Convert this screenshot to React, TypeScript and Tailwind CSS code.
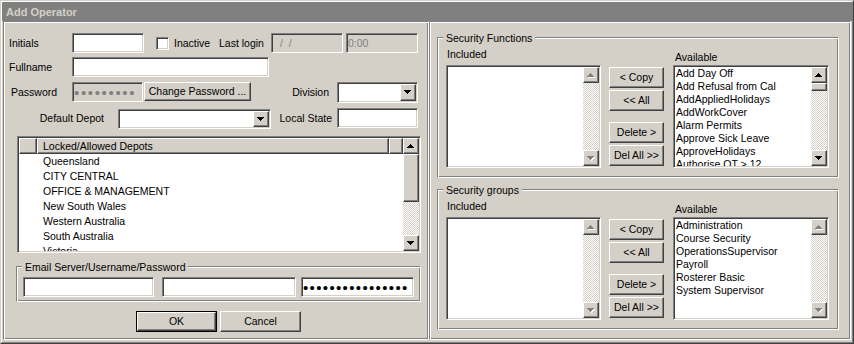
import React from "react";

const sunken =
  "border border-t-[#808080] border-l-[#808080] border-r-white border-b-white shadow-[inset_1px_1px_0_#404040,inset_-1px_-1px_0_#d4d0c8]";
const raised =
  "border border-t-white border-l-white border-r-[#404040] border-b-[#404040] shadow-[inset_-1px_-1px_0_#808080] bg-[#d4d0c8]";
const etched =
  "border border-t-[#808080] border-l-[#808080] border-r-white border-b-white shadow-[inset_1px_1px_0_#fff,inset_-1px_-1px_0_#808080]";
const dither = "bg-[repeating-conic-gradient(#fff_0_25%,#d4d0c8_0_50%)] bg-[length:2px_2px]";

const depots = [
  "Queensland",
  "CITY CENTRAL",
  "OFFICE & MANAGEMENT",
  "New South Wales",
  "Western Australia",
  "South Australia",
  "Victoria",
];

const functions = [
  "Add Day Off",
  "Add Refusal from Cal",
  "AddAppliedHolidays",
  "AddWorkCover",
  "Alarm Permits",
  "Approve Sick Leave",
  "ApproveHolidays",
  "Authorise OT > 12",
];

const groups = [
  "Administration",
  "Course Security",
  "OperationsSupervisor",
  "Payroll",
  "Rosterer Basic",
  "System Supervisor",
];

function Arrow({ dir, disabled }: { dir: "up" | "down"; disabled?: boolean }) {
  const d =
    dir === "up"
      ? "M3 0h1v1H3zM2 1h3v1H2zM1 2h5v1H1zM0 3h7v1H0z"
      : "M0 0h7v1H0zM1 1h5v1H1zM2 2h3v1H2zM3 3h1v1H3z";
  return (
    <svg width="8" height="5" viewBox="0 0 8 5" shapeRendering="crispEdges">
      {disabled && <path d={d} fill="#fff" transform="translate(1 1)" />}
      <path d={d} fill={disabled ? "#808080" : "#000"} />
    </svg>
  );
}

function Btn({
  children,
  className = "",
  def = false,
}: {
  children?: React.ReactNode;
  className?: string;
  def?: boolean;
}) {
  if (def) {
    return (
      <div className={`border border-black ${className}`}>
        <div className={`h-full ${raised} flex items-center justify-center`}>{children}</div>
      </div>
    );
  }
  return <div className={`${raised} flex items-center justify-center ${className}`}>{children}</div>;
}

function Edit({
  children,
  className = "",
  disabled = false,
}: {
  children?: React.ReactNode;
  className?: string;
  disabled?: boolean;
}) {
  return (
    <div
      className={`${sunken} ${
        disabled ? "bg-[#d4d0c8] text-[#808080]" : "bg-white"
      } flex items-center overflow-hidden whitespace-pre ${className}`}
    >
      {children}
    </div>
  );
}

function Combo({ className = "" }: { className?: string }) {
  return (
    <div className={`${sunken} bg-white p-[1px] flex justify-end ${className}`}>
      <div className={`${raised} w-[16px] h-full flex items-center justify-center`}>
        <Arrow dir="down" />
      </div>
    </div>
  );
}

function VScroll({ enabled, thumb }: { enabled: boolean; thumb?: string }) {
  return (
    <div className="w-[16px] h-full flex flex-col shrink-0">
      <div className={`${raised} h-[16px] shrink-0 flex items-center justify-center`}>
        <Arrow dir="up" disabled={!enabled} />
      </div>
      <div className={`flex-1 ${dither}`}>{thumb && <div className={`${raised} ${thumb}`} />}</div>
      <div className={`${raised} h-[16px] shrink-0 flex items-center justify-center`}>
        <Arrow dir="down" disabled={!enabled} />
      </div>
    </div>
  );
}

function ListBox({ items, enabled, thumb }: { items: string[]; enabled: boolean; thumb?: string }) {
  return (
    <div className={`${sunken} bg-white p-[1px] flex h-[103px]`}>
      <div className="flex-1 overflow-hidden pl-[1px]">
        {items.map((i) => (
          <div key={i} className="h-[13px] leading-[13px] whitespace-nowrap">
            {i}
          </div>
        ))}
      </div>
      <VScroll enabled={enabled} thumb={thumb} />
    </div>
  );
}

function Group({
  title,
  className = "",
  children,
}: {
  title: string;
  className?: string;
  children?: React.ReactNode;
}) {
  return (
    <div className={`relative ${etched} ${className}`}>
      <span className="absolute -top-[6px] left-[5px] px-[3px] bg-[#d4d0c8] leading-[13px]">{title}</span>
      {children}
    </div>
  );
}

function Transfer({ title, available, enabled, thumb }: { title: string; available: string[]; enabled: boolean; thumb?: string }) {
  return (
    <Group title={title} className="w-[402px] h-[141px] flex pl-[8px]">
      <div className="w-[155px]">
        <div className="mt-[10px] h-[13px] pl-[1px]">Included</div>
        <div className="mt-[4px]">
          <ListBox items={[]} enabled={false} />
        </div>
      </div>
      <div className="ml-[8px] w-[55px] flex flex-col">
        <Btn className="mt-[29px] h-[21px]">&lt; Copy</Btn>
        <Btn className="mt-[2px] h-[21px]">&lt;&lt; All</Btn>
        <Btn className="mt-[11px] h-[21px]">Delete &gt;</Btn>
        <Btn className="mt-[2px] h-[21px]">Del All &gt;&gt;</Btn>
      </div>
      <div className="ml-[9px] w-[156px]">
        <div className="mt-[13px] h-[13px] pl-[2px]">Available</div>
        <div className="mt-[1px]">
          <ListBox items={available} enabled={enabled} thumb={thumb} />
        </div>
      </div>
    </Group>
  );
}

function LeftPanel() {
  return (
    <div className={`${etched} w-[426px] h-[319px] flex flex-col shrink-0`}>
      <div className="mt-[11px] flex items-center h-[20px]">
        <span className="w-[68px] pl-[5px]">Initials</span>
        <Edit className="w-[72px] h-[20px]" />
        <div className={`${sunken} bg-white w-[13px] h-[13px] ml-[12px]`} />
        <span className="ml-[5px] w-[45px]">Inactive</span>
        <span className="w-[52px]">Last login</span>
        <Edit disabled className="w-[72px] h-[20px] pl-[8px]">
          {"/  /"}
        </Edit>
        <Edit disabled className="ml-[3px] w-[72px] h-[20px] pl-[1px]">
          0:00
        </Edit>
      </div>

      <div className="mt-[4px] flex items-center h-[20px]">
        <span className="w-[68px] pl-[5px]">Fullname</span>
        <Edit className="w-[197px] h-[20px]" />
      </div>

      <div className="mt-[5px] flex items-start h-[21px]">
        <span className="w-[68px] h-[20px] pl-[7px] flex items-center">Password</span>
        <Edit disabled className="w-[71px] h-[20px] pl-[1px]">
          <span className="text-[15px] tracking-[1.65px] leading-[13px]">•••••••••</span>
        </Edit>
        <Btn className="ml-[1px] w-[107px] h-[19px]">Change Password ...</Btn>
        <span className="w-[86px] h-[20px] pr-[8px] flex items-center justify-end">Division</span>
        <Combo className="w-[81px] h-[21px]" />
      </div>

      <div className="mt-[5px] flex items-start h-[21px]">
        <span className="w-[114px] h-[21px] pr-[14px] flex items-center justify-end">Default Depot</span>
        <Combo className="mt-[1px] w-[153px] h-[20px]" />
        <span className="w-[66px] h-[20px] pr-[5px] flex items-center justify-end">Local State</span>
        <Edit className="w-[81px] h-[20px]" />
      </div>

      <div className={`${sunken} bg-white p-[1px] flex ml-[13px] mt-[7px] w-[404px] h-[117px]`}>
        <div className="flex-1 overflow-hidden flex flex-col">
          <div className="flex h-[16px] shrink-0">
            <div className={`${raised} w-[18px]`} />
            <div className={`${raised} w-[352px] pl-[5px] flex items-center`}>Locked/Allowed Depots</div>
            <div className={`${raised} flex-1`} />
          </div>
          {depots.map((d) => (
            <div key={d} className="h-[15px] leading-[15px] pl-[24px] shrink-0 whitespace-nowrap">
              {d}
            </div>
          ))}
        </div>
        <VScroll enabled thumb="h-[48px]" />
      </div>

      <Group title="Email Server/Username/Password" className="mt-[13px] ml-[12px] w-[405px] h-[36px] flex pt-[10px] pl-[6px]">
        <Edit className="w-[131px] h-[20px]" />
        <Edit className="ml-[8px] w-[134px] h-[20px]" />
        <Edit className="ml-[5px] w-[113px] h-[20px] pl-[1px]">
          <span className="text-[15px] tracking-[1.35px] leading-[13px]">••••••••••••••••</span>
        </Edit>
      </Group>

      <div className="mt-[9px] ml-[132px] flex">
        <Btn def className="w-[81px] h-[21px]">
          OK
        </Btn>
        <Btn className="ml-[3px] w-[81px] h-[21px]">Cancel</Btn>
      </div>
    </div>
  );
}

function RightPanel() {
  return (
    <div className={`${etched} w-[422px] h-[319px] flex flex-col`}>
      <div className="mt-[15px] ml-[7px]">
        <Transfer title="Security Functions" available={functions} enabled thumb="h-[8px]" />
      </div>
      <div className="mt-[11px] ml-[7px]">
        <Transfer title="Security groups" available={groups} enabled={false} />
      </div>
    </div>
  );
}

export default function App() {
  return (
    <div className="w-[854px] h-[344px] border border-t-[#d4d0c8] border-l-[#d4d0c8] border-r-[#404040] border-b-[#404040] bg-[#d4d0c8] text-black text-[10.5px] leading-[13px] font-['Liberation_Sans',Arial,sans-serif] select-none">
      <div className="h-full border border-t-white border-l-white border-r-[#808080] border-b-[#808080] flex flex-col">
        <div className="h-[19px] shrink-0 bg-[#808080] flex items-center pl-[4px] pt-[2px] text-[11px] font-bold text-[#d4d0c8]">
          Add Operator
        </div>
        <div className="flex pl-[1px]">
          <LeftPanel />
          <RightPanel />
        </div>
      </div>
    </div>
  );
}
